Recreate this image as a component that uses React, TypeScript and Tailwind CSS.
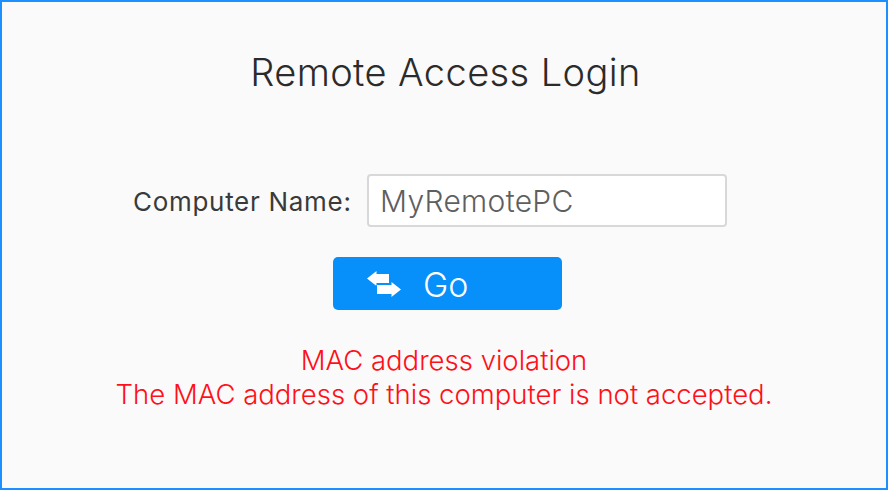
function ExchangeIcon() {
  return (
    <svg viewBox="0 0 34 26" className="h-[26px] w-[34px]" fill="currentColor">
      <path d="M0 7.5 L9.5 0 V3 H22 V12 H9.5 V15 Z" />
      <path d="M34 18.5 L24.5 26 V23 H10 V14 H24.5 V11 Z" stroke="#0790fa" strokeWidth="1" paintOrder="stroke" />
    </svg>
  )
}

export default function App() {
  return (
    <div className="box-border flex h-[490px] w-[888px] flex-col items-center border-2 border-[#1e8fff] bg-[#fafafa] font-['Inter','Liberation_Sans',sans-serif] font-light">
      <h1 className="mt-[47px] ml-[3px] text-[38px] leading-[46px] font-light tracking-[0.4px] text-[#2b2b2b]">Remote Access Login</h1>
      <div className="mt-[79px] mr-[28px] flex items-center">
        <label className="mt-[2px] mr-[15px] w-[219px] text-[26px] leading-[32px] font-normal tracking-[0.7px] whitespace-nowrap text-[#3a3a3a]">Computer Name:</label>
        <input
          readOnly
          value="MyRemotePC"
          className="h-[53px] w-[360px] rounded-[4px] border-2 border-[#d8d8d8] bg-white px-[11px] text-[30px] tracking-[0.3px] text-[#5f5f5f] outline-none"
        />
      </div>
      <button className="mt-[30px] ml-[7px] flex h-[53px] w-[229px] items-center rounded-[5px] bg-[#0790fa] pl-[34px] text-white">
        <ExchangeIcon />
        <span className="mt-[2px] ml-[22px] text-[34px] leading-none">Go</span>
      </button>
      <div className="mt-[33px] text-center text-[27.5px] leading-[34px] whitespace-nowrap text-[#ff1018]">
        <p>MAC address violation</p>
        <p>The MAC address of this computer is not accepted.</p>
      </div>
    </div>
  )
}
